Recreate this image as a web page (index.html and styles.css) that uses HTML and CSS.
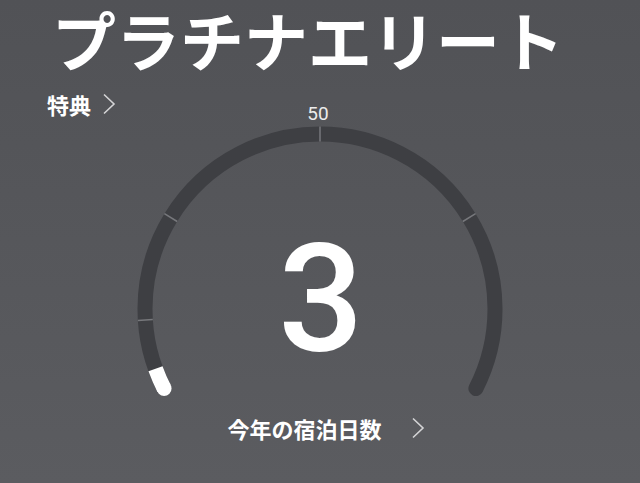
FILE: index.html
```html
<!DOCTYPE html>
<html lang="ja">
<head>
    <meta charset="UTF-8">
    <meta name="viewport" content="width=device-width, initial-scale=1.0">
    <title>プラチナエリート</title>
    <link rel="stylesheet" href="styles.css">
</head>
<body>
    <div class="status">
        <h1 class="title">プラチナエリート</h1>

        <a class="perks" href="#">
            <span>特典</span>
            <svg class="chevron" width="14" height="22" viewBox="0 0 14 22">
                <polyline points="2,1.5 12,11 2,20.5" />
            </svg>
        </a>

        <div class="gauge-label">50</div>

        <!-- nights gauge: 0 - 100, ticks at 10 / 25 / 50 / 75 -->
        <div class="gauge">
            <svg class="gauge-arc" width="640" height="275" viewBox="0 0 640 275">
                <path class="track" d="M 164.1 264.5 A 175 175 0 1 1 475.9 264.5" />
                <line class="tick" x1="152.8" y1="195.5" x2="137.9" y2="196.5" />
                <line class="tick" x1="177.2" y1="97.5" x2="164.4" y2="89.6" />
                <line class="tick" x1="320" y1="17.5" x2="320" y2="2.5" />
                <line class="tick" x1="462.8" y1="97.5" x2="475.6" y2="89.6" />
                <path class="progress" d="M 164.1 264.5 A 175 175 0 0 1 155.5 244.8" />
                <circle class="progress-cap" cx="164.1" cy="264.5" r="7.5" />
            </svg>
            <div class="value">3</div>
        </div>

        <a class="nights" href="#">
            <span>今年の宿泊日数</span>
            <svg class="chevron" width="14" height="22" viewBox="0 0 14 22">
                <polyline points="2,1.5 12,11 2,20.5" />
            </svg>
        </a>
    </div>
</body>
</html>
```

FILE: styles.css
```css
body {
    margin: 0;
    height: 483px;
    overflow: hidden;
    background: linear-gradient(#515256, #5b5c60);
    color: white;
    font-family: "Noto Sans CJK JP", "Noto Sans", sans-serif;
}
.status {
    display: flex;
    flex-direction: column;
}
.title {
    margin: 0;
    padding: 0 0 0 52px;
    font-size: 64px;
    font-weight: 700;
    line-height: 77px;
    white-space: nowrap;
}
.perks {
    display: flex;
    align-items: center;
    gap: 11px;
    margin: 15px 0 0 47px;
    color: white;
    text-decoration: none;
    font-size: 22px;
    font-weight: 700;
    line-height: 24px;
}
.chevron polyline {
    fill: none;
    stroke: #d4d4d6;
    stroke-width: 1.6;
}
.gauge-label {
    margin-top: -13px;
    text-align: center;
    padding-right: 4px;
    font-family: Roboto, "Liberation Sans", sans-serif;
    font-size: 19px;
    line-height: 21px;
    color: #ececec;
}
.gauge {
    display: grid;
}
.gauge-arc,
.value {
    grid-area: 1 / 1;
}
.track {
    fill: none;
    stroke: #3e3f43;
    stroke-width: 15;
    stroke-linecap: round;
}
.tick {
    stroke: #77787c;
    stroke-width: 1.5;
}
.progress {
    fill: none;
    stroke: white;
    stroke-width: 15;
}
.progress-cap {
    fill: white;
}
.value {
    align-self: start;
    justify-self: center;
    margin: 101px 0 0 2px;
    font-family: Roboto, "Open Sans", sans-serif;
    font-size: 150px;
    font-weight: 500;
    line-height: 1;
}
.nights {
    display: flex;
    justify-content: center;
    align-items: center;
    gap: 29px;
    margin-top: 16px;
    padding-left: 12px;
    color: white;
    text-decoration: none;
    font-size: 22px;
    font-weight: 700;
    line-height: 26px;
}
```
